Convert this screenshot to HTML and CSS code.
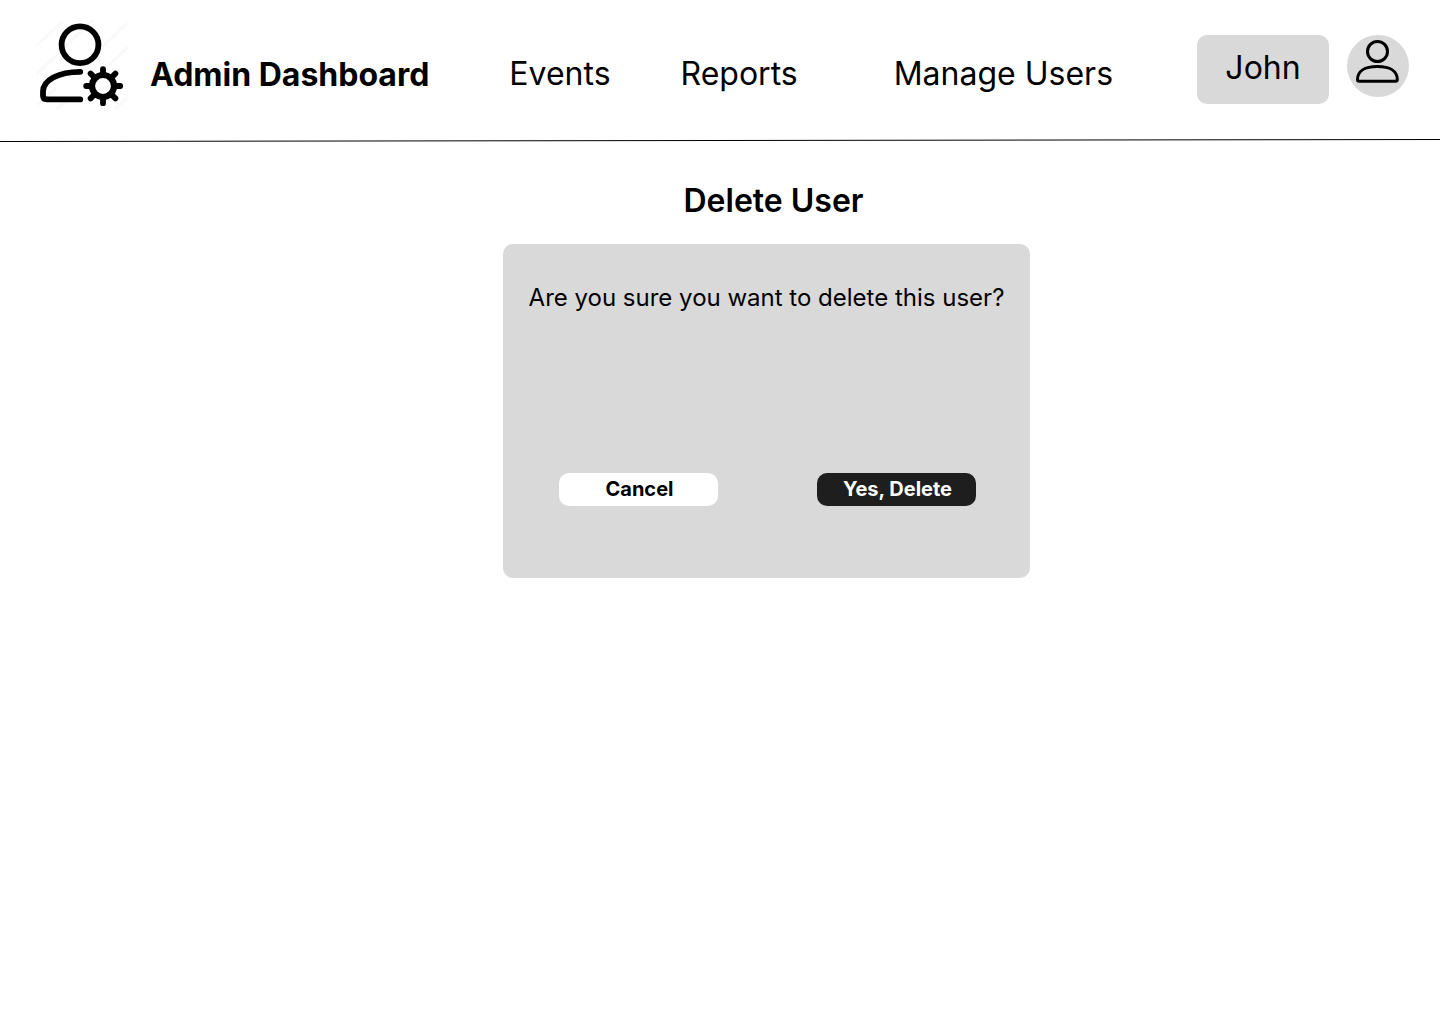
FILE: index.html
```html
<!DOCTYPE html>
<html lang="en">
<head>
  <meta charset="utf-8">
  <meta name="viewport" content="width=device-width, initial-scale=1">
  <title>Delete User</title>
  <link rel="stylesheet" href="styles.css">
</head>
<body>
  <header class="header">
    <div class="bar">
      <svg class="logo" viewBox="0 0 92 90" fill="none" stroke="#000" stroke-width="5.8" stroke-linecap="round" stroke-linejoin="round" aria-hidden="true">
        <path d="M1 25L26 2M1 54L56 1M62 31L90 4M70 48L91 28M2 84L20 68M22 88L34 78M80 88L90 79" stroke="#f9f9f9" stroke-width="3"/>
        <circle cx="44" cy="24.7" r="18.4"/>
        <path d="M44.2 51.8C22 51.8 7 60.5 7 71.5V75.5Q7 79.4 11 79.4H44.2"/>
        <circle cx="67" cy="66" r="11" stroke-width="6.2"/>
        <path d="M67 53V49.2M67 79V83.2M54 66H50.2M80 66H84.2M57.8 56.8L54.6 53.6M76.2 56.8L79.4 53.6M57.8 75.2L54.6 78.4M76.2 75.2L79.4 78.4"/>
      </svg>
      <p class="brand">Admin Dashboard</p>
      <nav class="nav">
        <a href="#events">Events</a>
        <a href="#reports">Reports</a>
        <a class="manage" href="#users">Manage Users</a>
      </nav>
      <div class="account">
        <button class="name" type="button">John</button>
        <button class="avatar" type="button" aria-label="Profile">
          <svg viewBox="0 0 62 62" fill="none" stroke="#000" stroke-width="3" stroke-linejoin="round" aria-hidden="true">
            <circle cx="30.5" cy="16.5" r="10"/>
            <path d="M10.5 44.5C10.5 36.5 17.5 31.6 30.4 31.6S50.3 36.5 50.3 44.5Q50.3 46.2 48.6 46.2H12.2Q10.5 46.2 10.5 44.5Z"/>
          </svg>
        </button>
      </div>
    </div>
    <svg class="rule" viewBox="0 0 1440 4" preserveAspectRatio="none" aria-hidden="true">
      <path d="M0 2.5L1440 .5" stroke="#000"/>
    </svg>
  </header>
  <main class="main">
    <h1 class="title">Delete User</h1>
    <section class="card">
      <p class="question">Are you sure you want to delete this user?</p>
      <div class="actions">
        <button class="button" type="button">Cancel</button>
        <button class="button danger" type="button">Yes, Delete</button>
      </div>
    </section>
  </main>
</body>
</html>
```
FILE: styles.css
```css
* {
  box-sizing: border-box;
}

body {
  margin: 0;
  background: #fff;
  color: #000;
  font-family: Inter, "Liberation Sans", sans-serif;
}

h1,
p {
  margin: 0;
}

button {
  border: 0;
  padding: 0;
  color: inherit;
  font: inherit;
  cursor: pointer;
}

.bar {
  display: flex;
  align-items: flex-start;
  padding: 20px 31px 29px 36px;
  font-size: 32px;
  line-height: 40px;
  white-space: nowrap;
}

.logo {
  flex: none;
  width: 92px;
  height: 90px;
}

.brand {
  margin: 35px 0 0 22px;
  font-weight: 700;
}

.nav {
  display: flex;
  gap: 70px;
  margin: 34px 0 0 80px;
}

.nav a {
  color: inherit;
  text-decoration: none;
}

.manage {
  margin-left: 26px;
}

.account {
  display: flex;
  align-items: flex-start;
  gap: 18px;
  margin: 15px 0 0 auto;
}

.name {
  width: 132px;
  height: 69px;
  padding-bottom: 4px;
  border-radius: 10px;
  background: #d9d9d9;
}

.avatar {
  width: 62px;
  height: 62px;
  border-radius: 50%;
  background: #d9d9d9;
}

.avatar svg,
.rule {
  display: block;
  width: 100%;
}

.rule {
  height: 4px;
}

.main {
  display: flex;
  flex-direction: column;
  align-items: center;
  padding: 38px 0 40px 93px;
}

.title {
  padding-left: 14px;
  font-size: 32px;
  font-weight: 600;
  line-height: 40px;
}

.card {
  width: 100%;
  max-width: 527px;
  margin-top: 23px;
  padding: 38px 0 72px;
  border-radius: 10px;
  background: #d9d9d9;
}

.question {
  font-size: 24px;
  line-height: 32px;
  text-align: center;
}

.actions {
  display: flex;
  justify-content: space-between;
  margin-top: 159px;
  padding: 0 54px 0 56px;
}

.button {
  width: 159px;
  height: 33px;
  padding: 0 0 2px 2px;
  border-radius: 10px;
  background: #fff;
  font-size: 20px;
  font-weight: 700;
  line-height: 24px;
}

.danger {
  background: #1e1e1e;
  color: #fff;
}
```
